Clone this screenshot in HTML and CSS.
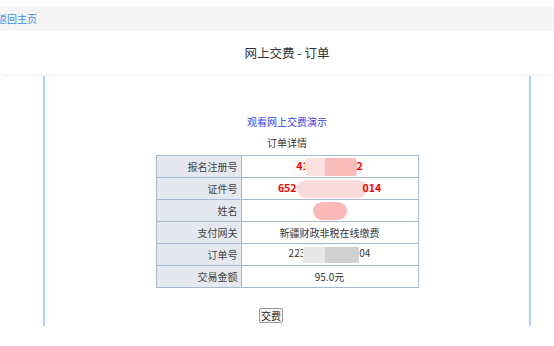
FILE: index.html
```html
<!DOCTYPE html>
<html lang="zh">
<head>
<meta charset="utf-8">
<link rel="stylesheet" href="styles.css">
</head>
<body>
<div class="topbar"><a class="home" href="#">返回主页</a></div>
<h1 class="title">网上交费 - 订单</h1>
<div class="rule"></div>
<div class="box">
  <a class="demo" href="#">观看网上交费演示</a>
  <div class="caption">订单详情</div>
  <table class="order">
    <tr><th>报名注册号</th><td class="red">41<span class="blur b1"></span>2</td></tr>
    <tr><th>证件号</th><td class="red">652<span class="blur b2"></span>014</td></tr>
    <tr><th>姓名</th><td class="red"><span class="blur b3"></span></td></tr>
    <tr><th>支付网关</th><td>新疆财政非税在线缴费</td></tr>
    <tr><th>订单号</th><td>223<span class="grey g1"></span>04</td></tr>
    <tr><th>交易金额</th><td>95.0元</td></tr>
  </table>
  <div class="actions"><button class="pay">交费</button></div>
</div>
</body>
</html>
```
FILE: styles.css
```css
html, body { margin: 0; padding: 0; background: #fff; }
body {
  font-family: "Noto Sans CJK SC", "Microsoft YaHei", sans-serif;
  font-size: 10px;
  color: #333;
  overflow: hidden;
}
.topbar {
  margin-top: 6px;
  height: 25px;
  background: #f5f5f5;
  display: flex;
  align-items: center;
}
.home {
  color: #3a8ee6;
  text-decoration: none;
  font-size: 10px;
  margin-left: -3px;
}
.title {
  margin: 0;
  height: 44px;
  line-height: 44px;
  font-size: 12.5px;
  font-weight: normal;
  color: #333;
  text-align: center;
  padding-left: 20px;
}
.rule { height: 1px; background: #f0f0f0; margin-left: 2px; }
.box {
  margin-left: 43px;
  width: 484px;
  height: 211px;
  border-left: 2px solid #a9d1ff;
  border-right: 2px solid #a9d1ff;
  display: flex;
  flex-direction: column;
  align-items: center;
  padding-top: 39px;
}
.demo { color: #3a3af0; text-decoration: none; line-height: 14px; }
.caption { margin-top: 7px; line-height: 14px; color: #333; }
.order {
  margin-top: 5px;
  border-collapse: collapse;
  width: 263px;
  border: 1px solid #a8b8cc;
}
.order th, .order td {
  border: 1px solid #a8b8cc;
  height: 21px;
  padding: 0;
  font-weight: normal;
  line-height: 14px;
}
.order th {
  width: 81px;
  background: #e5e9ef;
  text-align: right;
  padding-right: 3px;
  color: #444;
}
.order td { text-align: center; color: #333; white-space: nowrap; }
.order td.red { color: #f00; font-weight: bold; font-size: 10.5px; }
.blur { display: inline-block; vertical-align: middle; height: 18px; border-radius: 4px; }
.b1 { width: 52px; background: linear-gradient(90deg, #fde0e0 0 38%, #fbbcbc 38% 100%); margin-left: -4px; }
.b2 { width: 70px; background: #fbdada; border-radius: 9px; margin-left: 0; margin-right: -4px; }
.b3 { width: 34px; background: #fbb8b8; border-radius: 9px; }
.grey {
  display: inline-block; vertical-align: middle; height: 16px;
  background: linear-gradient(90deg, #e8e8e8 0 40%, #d0d0d0 40% 100%);
}
.g1 { width: 56px; margin-left: -2px; }
.actions { margin-top: 20px; padding-right: 32px; }
.pay {
  font-family: "Noto Sans CJK SC", sans-serif;
  font-size: 10px;
  padding: 0 1px;
  height: 15px;
  line-height: 13px;
  background: #f4f4f4;
  border: 1px solid #999;
  border-radius: 2px;
  color: #222;
}
```
